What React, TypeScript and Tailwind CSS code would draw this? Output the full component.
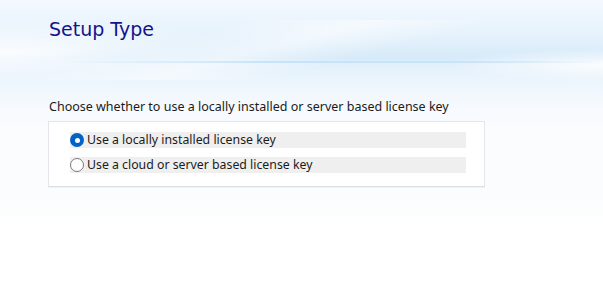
import React from "react";

export default function App() {
  return (
    <div className="relative w-[603px] h-[294px] overflow-hidden bg-white" style={{ fontFamily: '"Noto Sans", sans-serif' }}>
      {/* banner background */}
      <div className="absolute left-0 top-0 w-[603px] h-[224px] bg-[linear-gradient(180deg,#fafcfe_0px,#fbfcfe_200px,#ffffff_224px)]" />
      <div className="absolute left-0 top-0 w-[603px] h-[130px] bg-[linear-gradient(180deg,#f3f9fe_0px,#e6f2fc_35px,#d6eaf9_58px,#e2f0fb_64px,#eef6fd_85px,#f7fafe_110px,#fafcfe_130px)]" />
      <div className="absolute left-0 top-0 w-[603px] h-[130px] bg-[radial-gradient(ellipse_at_0%_40%,rgba(255,255,255,0.9)_0%,rgba(255,255,255,0)_30%)]" />
      <div className="absolute left-0 top-0 w-[603px] h-[130px] bg-[radial-gradient(ellipse_at_100%_50%,rgba(255,255,255,0.85)_0%,rgba(255,255,255,0)_18%)]" />
      <div className="absolute left-0 top-[20px] w-[603px] h-[60px] bg-[linear-gradient(165deg,rgba(255,255,255,0)_30%,rgba(255,255,255,0.5)_45%,rgba(255,255,255,0)_60%)]" />
      <div className="absolute left-[60px] top-[61px] w-[540px] h-[2px] bg-[linear-gradient(90deg,rgba(200,228,250,0)_0%,#c6e3fa_40%,#c8e4fa_75%,rgba(200,228,250,0)_100%)]" />

      <div className="relative flex flex-col">
        <div className="pl-[49px] pt-[18px] h-[98px]">
          <h1 className="text-[19px] leading-[22px] text-[#14148a]" style={{ fontFamily: '"DejaVu Sans", Verdana, sans-serif' }}>
            Setup Type
          </h1>
        </div>
        <div className="pl-[49px] text-[12.5px] leading-[17px] text-[#1b1b1b]">
          Choose whether to use a locally installed or server based license key
        </div>
        <div className="ml-[48px] mt-[6px] w-[437px] h-[66px] border border-[#e3e6ea] border-b-[#dde1e6] bg-white shadow-[0_1px_0_#eef1f4] pt-[10px] pl-[21px] flex flex-col gap-[9px]">
          <Row checked label="Use a locally installed license key" />
          <Row label="Use a cloud or server based license key" />
        </div>
      </div>
    </div>
  );
}

function Row({ checked, label }: { checked?: boolean; label: string }) {
  return (
    <div className="w-[396px] h-[16px] bg-[#efefef] flex items-center text-[12.3px] text-[#1b1b1b]">
      {checked ? (
        <span className="w-[14px] h-[14px] rounded-full bg-[#0063c8] flex items-center justify-center shrink-0">
          <span className="w-[5px] h-[5px] rounded-full bg-white" />
        </span>
      ) : (
        <span className="w-[14px] h-[14px] rounded-full border border-[#7a7a7a] bg-white shrink-0" />
      )}
      <span className="ml-[3px] leading-[16px]">{label}</span>
    </div>
  );
}
